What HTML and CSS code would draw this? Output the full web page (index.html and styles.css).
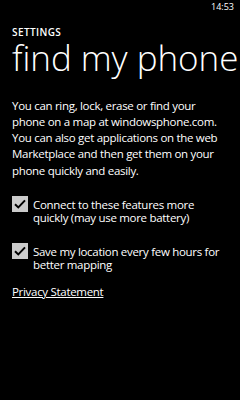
FILE: index.html
```html
<!DOCTYPE html>
<html>
<head>
<meta charset="utf-8">
<link rel="stylesheet" href="styles.css">
</head>
<body>
<div class="screen">
  <div class="status"><span class="clock">14:53</span></div>
  <div class="app-title">SETTINGS</div>
  <h1 class="page-title">find my phone</h1>
  <div class="content">
    <p class="desc">You can ring, lock, erase or find your phone on a map at windowsphone.com. You can also get applications on the web Marketplace and then get them on your phone quickly and easily.</p>
    <div class="option option-first">
      <span class="box"><svg width="12" height="10" viewBox="0 0 12 10"><path d="M1 5.2 L4.3 8.4 L11 1.4" fill="none" stroke="#000" stroke-width="2"/></svg></span>
      <span class="label">Connect to these features more quickly (may use more battery)</span>
    </div>
    <div class="option">
      <span class="box"><svg width="12" height="10" viewBox="0 0 12 10"><path d="M1 5.2 L4.3 8.4 L11 1.4" fill="none" stroke="#000" stroke-width="2"/></svg></span>
      <span class="label">Save my location every few hours for better mapping</span>
    </div>
    <a class="privacy" href="#">Privacy Statement</a>
  </div>
</div>
</body>
</html>
```
FILE: styles.css
```css
html, body {
  margin: 0;
  padding: 0;
  background: #000;
}
.screen {
  width: 240px;
  height: 400px;
  background: #000;
  color: #fff;
  font-family: "Open Sans", "Noto Sans", sans-serif;
  font-size: 11.5px;
  overflow: hidden;
  box-sizing: border-box;
  padding: 0 4px 0 12px;
}
.status {
  display: flex;
  justify-content: flex-end;
  height: 15px;
}
.clock {
  font-size: 9px;
  line-height: 12px;
  margin-top: 1px;
  margin-right: 2px;
}
.app-title {
  margin-top: 11px;
  font-size: 10px;
  font-weight: 600;
  line-height: 12px;
  letter-spacing: 0.4px;
}
.page-title {
  margin: 2px 0 0;
  font-size: 35px;
  font-weight: 300;
  line-height: 36px;
  letter-spacing: -0.05px;
  white-space: nowrap;
}
.content {
  width: 210px;
}
.desc {
  margin: 21.5px 0 0;
  line-height: 16.3px;
  letter-spacing: -0.3px;
}
.option {
  display: flex;
  align-items: flex-start;
  gap: 5px;
  margin-top: 19px;
}
.option-first {
  margin-top: 17.5px;
}
.box {
  flex: none;
  width: 16px;
  height: 16px;
  background: #cbcbcb;
  display: flex;
  align-items: center;
  justify-content: center;
}
.label {
  margin-top: 2px;
  line-height: 13px;
  letter-spacing: -0.3px;
}
.privacy {
  display: block;
  width: max-content;
  margin-top: 11.5px;
  color: #fff;
  line-height: 17px;
  letter-spacing: -0.3px;
  text-decoration: underline;
}
```
